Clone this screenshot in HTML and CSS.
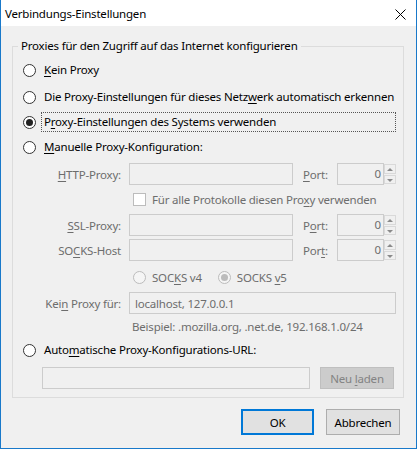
FILE: index.html
```html
<!DOCTYPE html>
<html lang="de">
<head>
<meta charset="utf-8">
<title>Verbindungs-Einstellungen</title>
<link rel="stylesheet" href="styles.css">
</head>
<body>
<div class="window">
  <div class="titlebar">
    <span class="title">Verbindungs-Einstellungen</span>
    <svg class="close" width="11" height="11" viewBox="0 0 11 11"><path d="M0.5 0.5 L10.5 10.5 M10.5 0.5 L0.5 10.5" stroke="#000" stroke-width="1" fill="none"/></svg>
  </div>
  <div class="content">
    <div class="group">
      <div class="legend">Proxies für den Zugriff auf das Internet konfigurieren</div>
      <div class="row r1"><span class="radio"></span><span class="lbl"><u>K</u>ein Proxy</span></div>
      <div class="row r2"><span class="radio"></span><span class="lbl">Die Proxy-Einstellungen für dieses Netz<u>w</u>erk automatisch erkennen</span></div>
      <div class="row r3"><span class="radio checked"></span><span class="lbl focus">P<u>r</u>oxy-Einstellungen des Systems verwenden</span></div>
      <div class="row r4"><span class="radio"></span><span class="lbl"><u>M</u>anuelle Proxy-Konfiguration:</span></div>

      <div class="row r5 field">
        <span class="flabel"><u>H</u>TTP-Proxy:</span>
        <span class="input host"></span>
        <span class="plabel"><u>P</u>ort:</span>
        <span class="port"><span class="pinput">0</span><span class="spin"><span class="up"></span><span class="down"></span></span></span>
      </div>
      <div class="row r6 sub">
        <span class="check"></span><span class="dlbl">Für alle Protokolle diesen Pro<u>x</u>y verwenden</span>
      </div>
      <div class="row r7 field">
        <span class="flabel"><u>S</u>SL-Proxy:</span>
        <span class="input host"></span>
        <span class="plabel">P<u>o</u>rt:</span>
        <span class="port"><span class="pinput">0</span><span class="spin"><span class="up"></span><span class="down"></span></span></span>
      </div>
      <div class="row r8 field">
        <span class="flabel">SO<u>C</u>KS-Host</span>
        <span class="input host"></span>
        <span class="plabel">Por<u>t</u>:</span>
        <span class="port"><span class="pinput">0</span><span class="spin"><span class="up"></span><span class="down"></span></span></span>
      </div>
      <div class="row r9 sub">
        <span class="radio disabled"></span><span class="dlbl v4">SOC<u>K</u>S v4</span>
        <span class="radio disabled checked"></span><span class="dlbl">SOCKS <u>v</u>5</span>
      </div>
      <div class="row r10 field">
        <span class="flabel">Kei<u>n</u> Proxy für:</span>
        <span class="input noproxy">localhost, 127.0.0.1</span>
      </div>
      <div class="row r11 sub2">
        <span class="dlbl">Beispiel: .mozilla.org, .net.de, 192.168.1.0/24</span>
      </div>
      <div class="row r12"><span class="radio"></span><span class="lbl">Auto<u>m</u>atische Proxy-Konfigurations-URL:</span></div>
      <div class="row r13 urlrow">
        <span class="input url"></span>
        <span class="btn disabledbtn"><span>Neu <u>l</u>aden</span></span>
      </div>
    </div>
    <div class="buttons">
      <span class="btn default"><span>OK</span></span>
      <span class="btn"><span>Abbrechen</span></span>
    </div>
  </div>
</div>
</body>
</html>
```
FILE: styles.css
```css
* { box-sizing: border-box; }
html, body { margin: 0; padding: 0; }
body {
  width: 417px;
  height: 449px;
  overflow: hidden;
  font-family: "Noto Sans", "DejaVu Sans", sans-serif;
  font-size: 11.5px;
  letter-spacing: -0.2px;
  color: #000;
  background: #f0f0f0;
  white-space: nowrap;
}
u { text-decoration: underline; text-underline-offset: 2px; }

.window {
  width: 417px;
  height: 449px;
  border: 1px solid #1979ca;
  border-top: none;
  display: flex;
  flex-direction: column;
  background: #f0f0f0;
}
.titlebar {
  height: 26px;
  background: #fff;
  display: flex;
  align-items: center;
  justify-content: space-between;
  padding: 1px 10px 0 4px;
  flex: none;
}
.close { display: block; margin-top: 2px; }

.content {
  flex: 1;
  padding: 20px 12px 0 11px;
  display: flex;
  flex-direction: column;
}

.group {
  position: relative;
  border: 1px solid #dcdcdc;
  height: 352px;
  padding: 13px 7px 0 10px;
  display: flex;
  flex-direction: column;
}
.legend {
  position: absolute;
  left: 5px;
  top: -9px;
  padding: 0 3px;
  background: #f0f0f0;
  line-height: 16px;
}

.row {
  display: flex;
  align-items: center;
  height: 20px;
  flex: none;
}
.r2 { margin-top: 7px; }
.r3 { margin-top: 5px; }
.r4 { margin-top: 5px; }
.r5 { margin-top: 6px; height: 22px; }
.r6 { margin-top: 4px; }
.r7 { margin-top: 5px; height: 22px; }
.r8 { margin-top: 3px; height: 22px; }
.r9 { margin-top: 6px; }
.r10 { margin-top: 5px; height: 22px; }
.r11 { margin-top: 2px; }
.r12 { margin-top: 4px; }
.r13 { margin-top: 7px; height: 22px; }

.radio {
  width: 13px;
  height: 13px;
  border: 1px solid #333;
  border-radius: 50%;
  background: #fff;
  flex: none;
  position: relative;
}
.radio.checked::after {
  content: "";
  position: absolute;
  left: 2px;
  top: 2px;
  width: 7px;
  height: 7px;
  border-radius: 50%;
  background: #222;
}
.radio.disabled {
  border-color: #bcbcbc;
  background: #f5f5f5;
}
.radio.disabled.checked::after { background: #bcbcbc; }

.lbl {
  margin-left: 5px;
  padding: 0 2px;
  line-height: 18px;
  border: 1px solid transparent;
}
.lbl.focus {
  border: 1px dotted #555;
  flex: 1;
}

.field { padding-left: 17px; }
.flabel {
  width: 81px;
  text-align: right;
  color: #6d6d6d;
  flex: none;
}
.input {
  height: 22px;
  border: 1px solid #cccccc;
  background: #f0f0f0;
  color: #6d6d6d;
  display: flex;
  align-items: center;
  padding-left: 5px;
  flex: none;
}
.host { width: 164px; margin-left: 8px; }
.plabel {
  margin-left: 10px;
  width: 34px;
  color: #6d6d6d;
  flex: none;
}
.port { display: flex; height: 22px; }
.pinput {
  width: 47px;
  height: 22px;
  border: 1px solid #cccccc;
  text-align: right;
  padding-right: 2px;
  line-height: 20px;
  color: #6d6d6d;
}
.spin {
  width: 12px;
  height: 22px;
  display: flex;
  flex-direction: column;
  gap: 1px;
  padding: 1px 0;
}
.spin span {
  flex: 1;
  border: 1px solid #d9d9d9;
  background: #f0f0f0;
  position: relative;
}
.spin .up::after, .spin .down::after {
  content: "";
  position: absolute;
  left: 2px;
  top: 3px;
  border-left: 3px solid transparent;
  border-right: 3px solid transparent;
}
.spin .up::after { border-bottom: 3px solid #8a8a8a; }
.spin .down::after { border-top: 3px solid #8a8a8a; }

.sub { padding-left: 110px; }
.check {
  width: 13px;
  height: 13px;
  border: 1px solid #bcbcbc;
  background: #fff;
  flex: none;
}
.dlbl { margin-left: 6px; color: #6d6d6d; }
.v4 { margin-right: 16px; }
.noproxy { width: 267px; margin-left: 8px; }
.sub2 { padding-left: 109px; }
.sub2 .dlbl { margin-left: 0; }

.urlrow { padding-left: 19px; gap: 10px; }
.url { width: 268px; }

.btn {
  display: flex;
  align-items: center;
  justify-content: center;
  height: 26px;
  width: 74px;
  border: 1px solid #adadad;
  background: #e1e1e1;
  flex: none;
}
.disabledbtn {
  height: 22px;
  background: #cccccc;
  border-color: #bfbfbf;
  color: #838383;
}
.buttons {
  display: flex;
  justify-content: flex-end;
  gap: 12px;
  margin-top: 11px;
  padding-right: 4px;
}
.btn.default {
  border: 2px solid #0078d7;
  width: 73px;
}
```
